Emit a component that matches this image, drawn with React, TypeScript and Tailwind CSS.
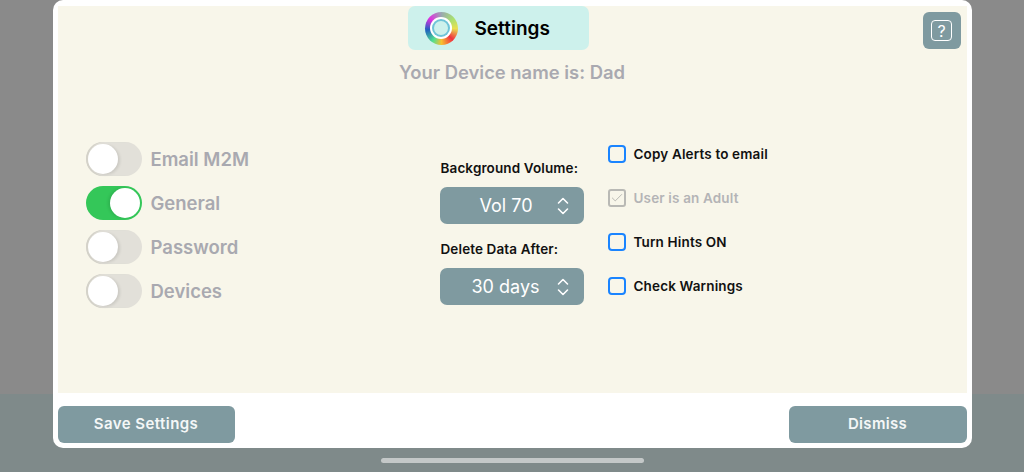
import { Check } from "lucide-react";

const font = "font-['Inter','Noto_Sans',sans-serif]";

function Toggle({ label, on }: { label: string; on?: boolean }) {
  return (
    <div className="flex h-[44px] items-center gap-[9px]">
      {on ? (
        <div className="flex h-[34px] w-[56px] items-center justify-end rounded-full bg-[#34c759] pr-[2px]">
          <div className="h-[30px] w-[30px] rounded-full bg-white shadow-[-2px_0_3px_rgba(0,0,0,0.1)]" />
        </div>
      ) : (
        <div className="flex h-[34px] w-[56px] items-center rounded-full bg-[#e2e0d9] pl-[2px] shadow-[inset_2px_0_1px_#d3d1c8]">
          <div className="h-[30px] w-[30px] rounded-full bg-white shadow-[2px_1px_3px_rgba(0,0,0,0.1)]" />
        </div>
      )}
      <span className="text-[18.5px] font-semibold leading-none text-[#a9a9b0]">{label}</span>
    </div>
  );
}

function Select({ label, value, pad }: { label: string; value: string; pad: string }) {
  return (
    <div className="flex flex-col">
      <div className="flex h-[20px] items-center whitespace-nowrap pl-[1px] text-[13.5px] font-semibold tracking-[0.12px] text-[#111111]">
        {label}
      </div>
      <div className="mt-[9px] flex h-[37px] w-[144px] items-center rounded-[7px] bg-[#7f9aa0]">
        <span className={`${pad} text-[18px] font-normal leading-none text-white`}>{value}</span>
        <svg
          className="ml-auto mr-[15px]"
          width="12"
          height="18"
          viewBox="0 0 12 18"
          fill="none"
          stroke="#ffffff"
          strokeWidth="1.6"
          strokeLinecap="round"
          strokeLinejoin="round"
        >
          <path d="M1.5 6 L6 1.5 L10.5 6" />
          <path d="M1.5 12 L6 16.5 L10.5 12" />
        </svg>
      </div>
    </div>
  );
}

function CheckRow({ label, disabled }: { label: string; disabled?: boolean }) {
  return (
    <div className="flex h-[44px] items-center gap-[8px]">
      {disabled ? (
        <div className="flex h-[18px] w-[18px] items-center justify-center rounded-[3px] border-2 border-[#b9b9b5]">
          <Check size={14} color="#b0b0ac" strokeWidth={1.5} />
        </div>
      ) : (
        <div className="h-[18px] w-[18px] rounded-[4px] border-2 border-[#1a84ff]" />
      )}
      <span
        className={`whitespace-nowrap text-[13.5px] font-semibold tracking-[0.15px] ${
          disabled ? "text-[#b4b4b6]" : "text-[#111111]"
        }`}
      >
        {label}
      </span>
    </div>
  );
}

function Logo() {
  return (
    <div className="flex h-[33px] w-[33px] items-center justify-center rounded-full bg-[conic-gradient(#9aa9b0_0deg,#a8e070_50deg,#e8e050_90deg,#f03040_135deg,#f8c030_180deg,#50e090_215deg,#2060c0_265deg,#e030e0_310deg,#9aa9b0_360deg)] blur-[0.6px]">
      <div className="flex h-[22px] w-[22px] items-center justify-center rounded-full bg-white">
        <div className="flex h-[18px] w-[18px] items-center justify-center rounded-full bg-[#6fc4d8]">
          <div className="h-[14px] w-[14px] rounded-full bg-[#cdf1ec]" />
        </div>
      </div>
    </div>
  );
}

export default function App() {
  return (
    <div
      className={`${font} relative flex h-[472px] w-[1024px] justify-center overflow-hidden bg-[linear-gradient(#8a8a8a_0,#8a8a8a_394px,#7f8a8a_394px)]`}
    >
      {/* Modal */}
      <div className="flex h-[448px] w-[919px] flex-col rounded-[10px] bg-white px-[5px] pt-[6px]">
        <div className="relative flex h-[387px] flex-col bg-[#f8f6ea]">
          {/* Header */}
          <div className="ml-[350px] flex h-[44px] w-[181px] items-center rounded-[7px] bg-[#cdf1ec] pl-[17px]">
            <Logo />
            <span className="ml-[17px] text-[19px] font-semibold leading-none text-black">Settings</span>
          </div>
          <div className="mt-[11px] text-center text-[18.4px] font-semibold leading-[22px] text-[#a9a9b0]">
            Your Device name is: Dad
          </div>

          <button className="absolute right-[6px] top-[6px] flex h-[37px] w-[38px] items-center justify-center rounded-[6px] bg-[#7f9aa0]">
            <div className="flex h-[21px] w-[21px] items-center justify-center rounded-[4px] border-[1.5px] border-white text-[16px] leading-none text-white">
              ?
            </div>
          </button>

          {/* Controls */}
          <div className="mt-[49px] flex items-start">
            <div className="mt-[5px] flex w-[382px] flex-col pl-[28px]">
              <Toggle label="Email M2M" />
              <Toggle label="General" on />
              <Toggle label="Password" />
              <Toggle label="Devices" />
            </div>
            <div className="mt-[26px] flex w-[144px] flex-col gap-[15px]">
              <Select label="Background Volume:" value="Vol 70" pad="pl-[40px]" />
              <Select label="Delete Data After:" value="30 days" pad="pl-[32px]" />
            </div>
            <div className="ml-[24px] flex flex-col">
              <CheckRow label="Copy Alerts to email" />
              <CheckRow label="User is an Adult" disabled />
              <CheckRow label="Turn Hints ON" />
              <CheckRow label="Check Warnings" />
            </div>
          </div>
        </div>

        {/* Footer */}
        <div className="mt-[13px] flex justify-between">
          <button className="h-[37px] w-[177px] rounded-[6px] bg-[#7f9aa0] text-[15px] font-semibold tracking-[0.45px] text-[#f4f7f7]">
            Save Settings
          </button>
          <button className="h-[37px] w-[178px] rounded-[6px] bg-[#7f9aa0] text-[15px] font-semibold tracking-[0.3px] text-[#f4f7f7]">
            Dismiss
          </button>
        </div>
      </div>

      {/* Home indicator */}
      <div className="absolute bottom-[9px] left-[381px] h-[5px] w-[263px] rounded-full bg-[#c4c8c8]" />
    </div>
  );
}
